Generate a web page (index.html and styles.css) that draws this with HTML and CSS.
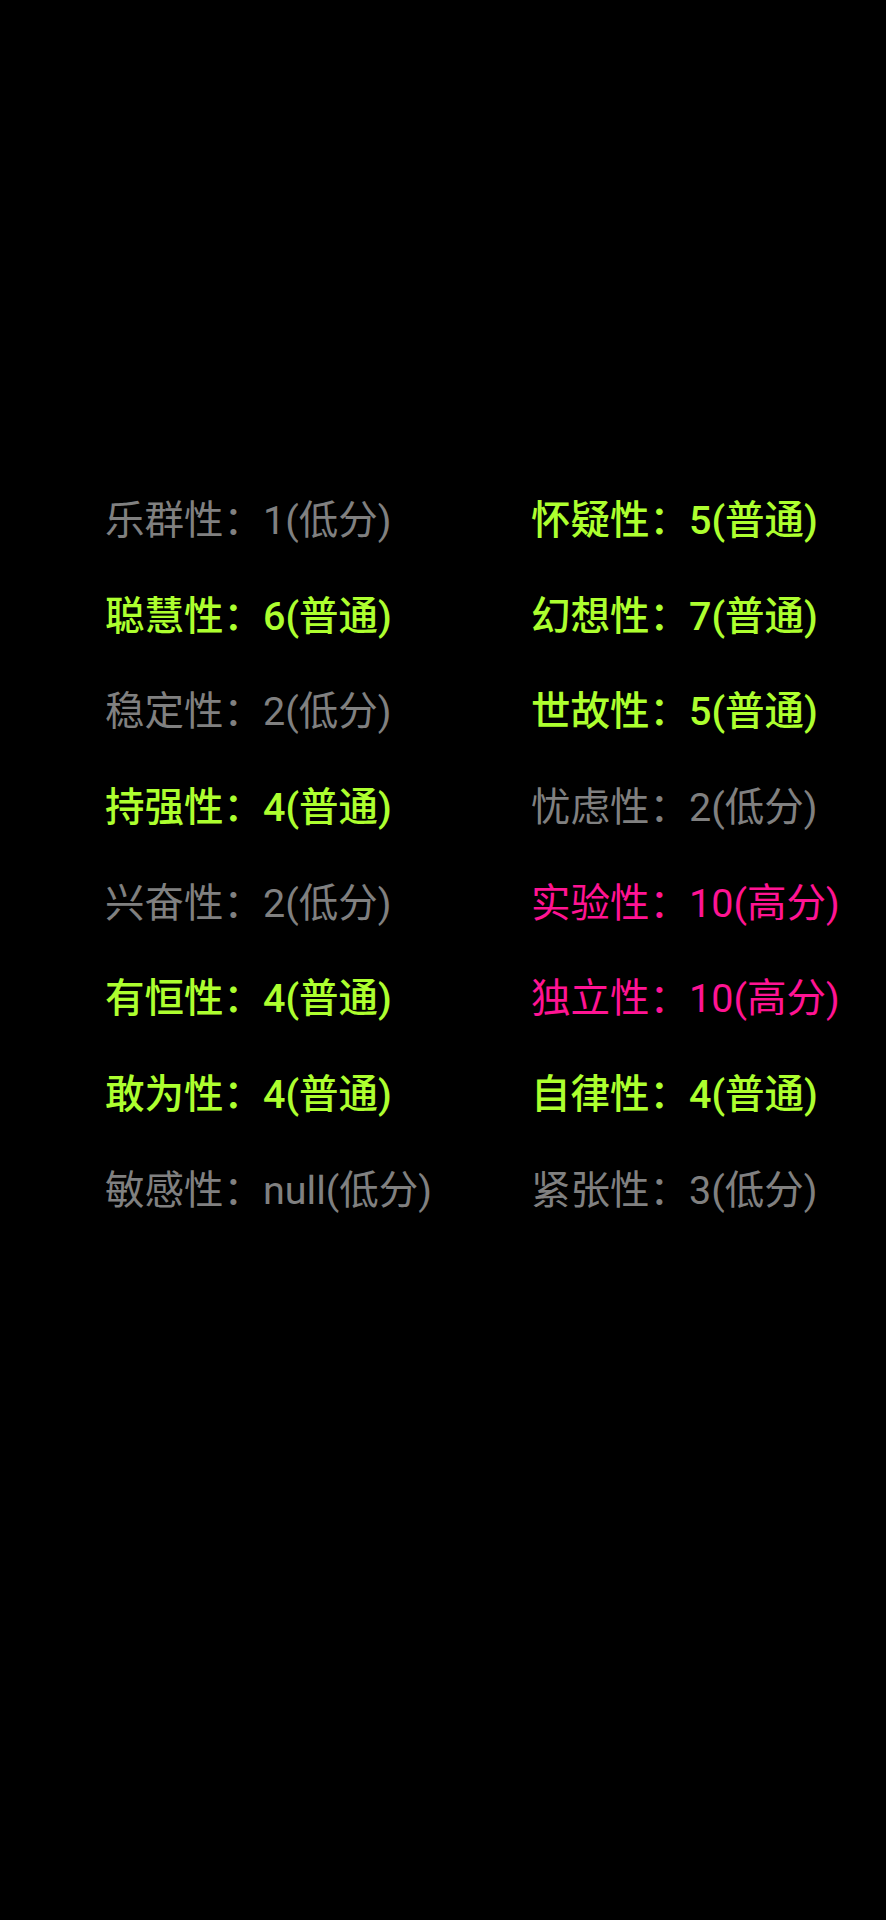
FILE: index.html
```html
<!DOCTYPE html>
<html lang="zh">
<head>
<meta charset="utf-8">
<link rel="stylesheet" href="styles.css">
</head>
<body>
<div class="screen">
  <div class="grid">
    <div class="item low">乐群性：1(低分)</div>
    <div class="item mid">怀疑性：5(普通)</div>
    <div class="item mid">聪慧性：6(普通)</div>
    <div class="item mid">幻想性：7(普通)</div>
    <div class="item low">稳定性：2(低分)</div>
    <div class="item mid">世故性：5(普通)</div>
    <div class="item mid">持强性：4(普通)</div>
    <div class="item low">忧虑性：2(低分)</div>
    <div class="item low">兴奋性：2(低分)</div>
    <div class="item high">实验性：10(高分)</div>
    <div class="item mid">有恒性：4(普通)</div>
    <div class="item high">独立性：10(高分)</div>
    <div class="item mid">敢为性：4(普通)</div>
    <div class="item mid">自律性：4(普通)</div>
    <div class="item low">敏感性：null(低分)</div>
    <div class="item low">紧张性：3(低分)</div>
  </div>
</div>
</body>
</html>
```
FILE: styles.css
```css
html, body {
  margin: 0;
  padding: 0;
  background: #000;
}
.screen {
  width: 886px;
  height: 1920px;
  background: #000;
  padding-top: 473px;
  box-sizing: border-box;
  overflow: hidden;
}
.grid {
  display: grid;
  grid-template-columns: 426px 1fr;
  grid-auto-rows: 95.7px;
  padding-left: 105px;
}
.item {
  font-family: Roboto, "Noto Sans CJK SC", sans-serif;
  font-size: 39.5px;
  line-height: 95.7px;
  white-space: nowrap;
}
.low {
  color: #808080;
}
.mid {
  color: #adff2f;
  font-weight: 500;
}
.high {
  color: #ff1493;
}
```
